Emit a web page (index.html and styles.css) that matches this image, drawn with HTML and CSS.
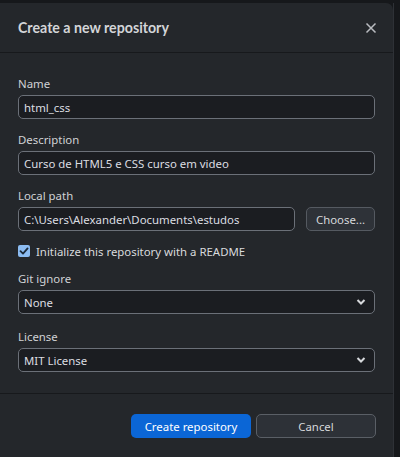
FILE: index.html
```html
<!DOCTYPE html>
<html>
<head>
<meta charset="utf-8">
<link rel="stylesheet" href="styles.css">
</head>
<body>
<div class="page">
  <div class="dialog">
    <div class="header">
      <h1 class="title">Create a new repository</h1>
      <svg class="close" width="12" height="12" viewBox="0 0 12 12"><path d="M1.5 1.5 L10.5 10.5 M10.5 1.5 L1.5 10.5" stroke="#b9bcc0" stroke-width="1.5" fill="none"/></svg>
    </div>
    <div class="body">
      <div class="field">
        <label class="label">Name</label>
        <div class="input">html_css</div>
      </div>
      <div class="field">
        <label class="label">Description</label>
        <div class="input">Curso de HTML5 e CSS curso em video</div>
      </div>
      <div class="field">
        <label class="label">Local path</label>
        <div class="row">
          <div class="input grow">C:\Users\Alexander\Documents\estudos</div>
          <div class="btn choose">Choose...</div>
        </div>
      </div>
      <div class="check">
        <span class="box"><svg width="10" height="10" viewBox="0 0 10 10"><path d="M1.5 5.2 L4 7.6 L8.6 2.4" stroke="#1b2a3a" stroke-width="1.8" fill="none" stroke-linecap="round" stroke-linejoin="round"/></svg></span>
        <span class="check-text">Initialize this repository with a README</span>
      </div>
      <div class="field gi">
        <label class="label">Git ignore</label>
        <div class="input select"><span>None</span><svg class="chev" width="10" height="8" viewBox="0 0 10 8"><path d="M1.5 2 L5 5.5 L8.5 2" stroke="#d6d8db" stroke-width="2" fill="none"/></svg></div>
      </div>
      <div class="field last">
        <label class="label">License</label>
        <div class="input select"><span>MIT License</span><svg class="chev" width="10" height="8" viewBox="0 0 10 8"><path d="M1.5 2 L5 5.5 L8.5 2" stroke="#d6d8db" stroke-width="2" fill="none"/></svg></div>
      </div>
    </div>
    <div class="footer">
      <div class="btn primary">Create repository</div>
      <div class="btn cancel">Cancel</div>
    </div>
  </div>
  <div class="side"></div>
</div>
</body>
</html>
```

FILE: styles.css
```css
* { box-sizing: border-box; }
html, body { margin: 0; padding: 0; }
body {
  background: #16181b;
  font-family: "Noto Sans", "Liberation Sans", sans-serif;
  font-size: 11.4px;
  color: #d8dadd;
  width: 400px;
  height: 457px;
  overflow: hidden;
}
.page { display: flex; padding-top: 3px; height: 457px; }
.dialog {
  width: 393px;
  height: 454px;
  background: #24272b;
  border-radius: 0 7px 0 0;
  display: flex;
  flex-direction: column;
}
.side { flex: 1; background: #16181b; border-left: 1px solid #2e3136; }
.header {
  height: 50px;
  flex: none;
  border-bottom: 1px solid #17191c;
  display: flex;
  align-items: center;
  justify-content: space-between;
  padding: 0 16px 0 18px;
}
.title {
  margin: 0;
  font-family: Lato, "Noto Sans", sans-serif;
  font-size: 14.2px;
  font-weight: 700;
  color: #d3d5d8;
}
.close { margin-top: 1px; }
.body {
  flex: none;
  padding: 23px 18px 0 18px;
  height: 341px;
  border-bottom: 1px solid #17191c;
}
.field { display: flex; flex-direction: column; margin-bottom: 13px; }
.field.gi { margin-bottom: 15px; }
.label { color: #d0d2d5; line-height: 15px; margin-bottom: 4px; }
.input {
  height: 24px;
  border: 1px solid #6b7078;
  border-radius: 5px;
  background: #1b1d21;
  padding: 0 5px;
  display: flex;
  align-items: center;
  color: #dcdee1;
  width: 357px;
}
.row { display: flex; gap: 11px; }
.grow { width: 277px; }
.btn {
  height: 24px;
  border-radius: 5px;
  display: flex;
  align-items: center;
  justify-content: center;
}
.choose {
  width: 69px;
  background: #2e3238;
  border: 1px solid #555a61;
  color: #d6d8db;
}
.check { display: flex; align-items: center; margin: 2px 0 13px; height: 14px; }
.box {
  width: 12px; height: 12px;
  border-radius: 2px;
  background: #8cbcf2;
  display: flex; align-items: center; justify-content: center;
  margin-right: 6px;
}
.check-text { color: #d8dadd; }
.select { justify-content: space-between; padding-right: 8px; }
.chev { display: block; }
.footer {
  flex: 1;
  display: flex;
  justify-content: flex-end;
  align-items: flex-start;
  padding: 20px 17px 0 0;
  gap: 5px;
}
.primary {
  width: 120px;
  background: #0b66d6;
  color: #ffffff;
}
.cancel {
  width: 120px;
  background: #2d3137;
  border: 1px solid #5a5f66;
  color: #d6d8db;
}
```
